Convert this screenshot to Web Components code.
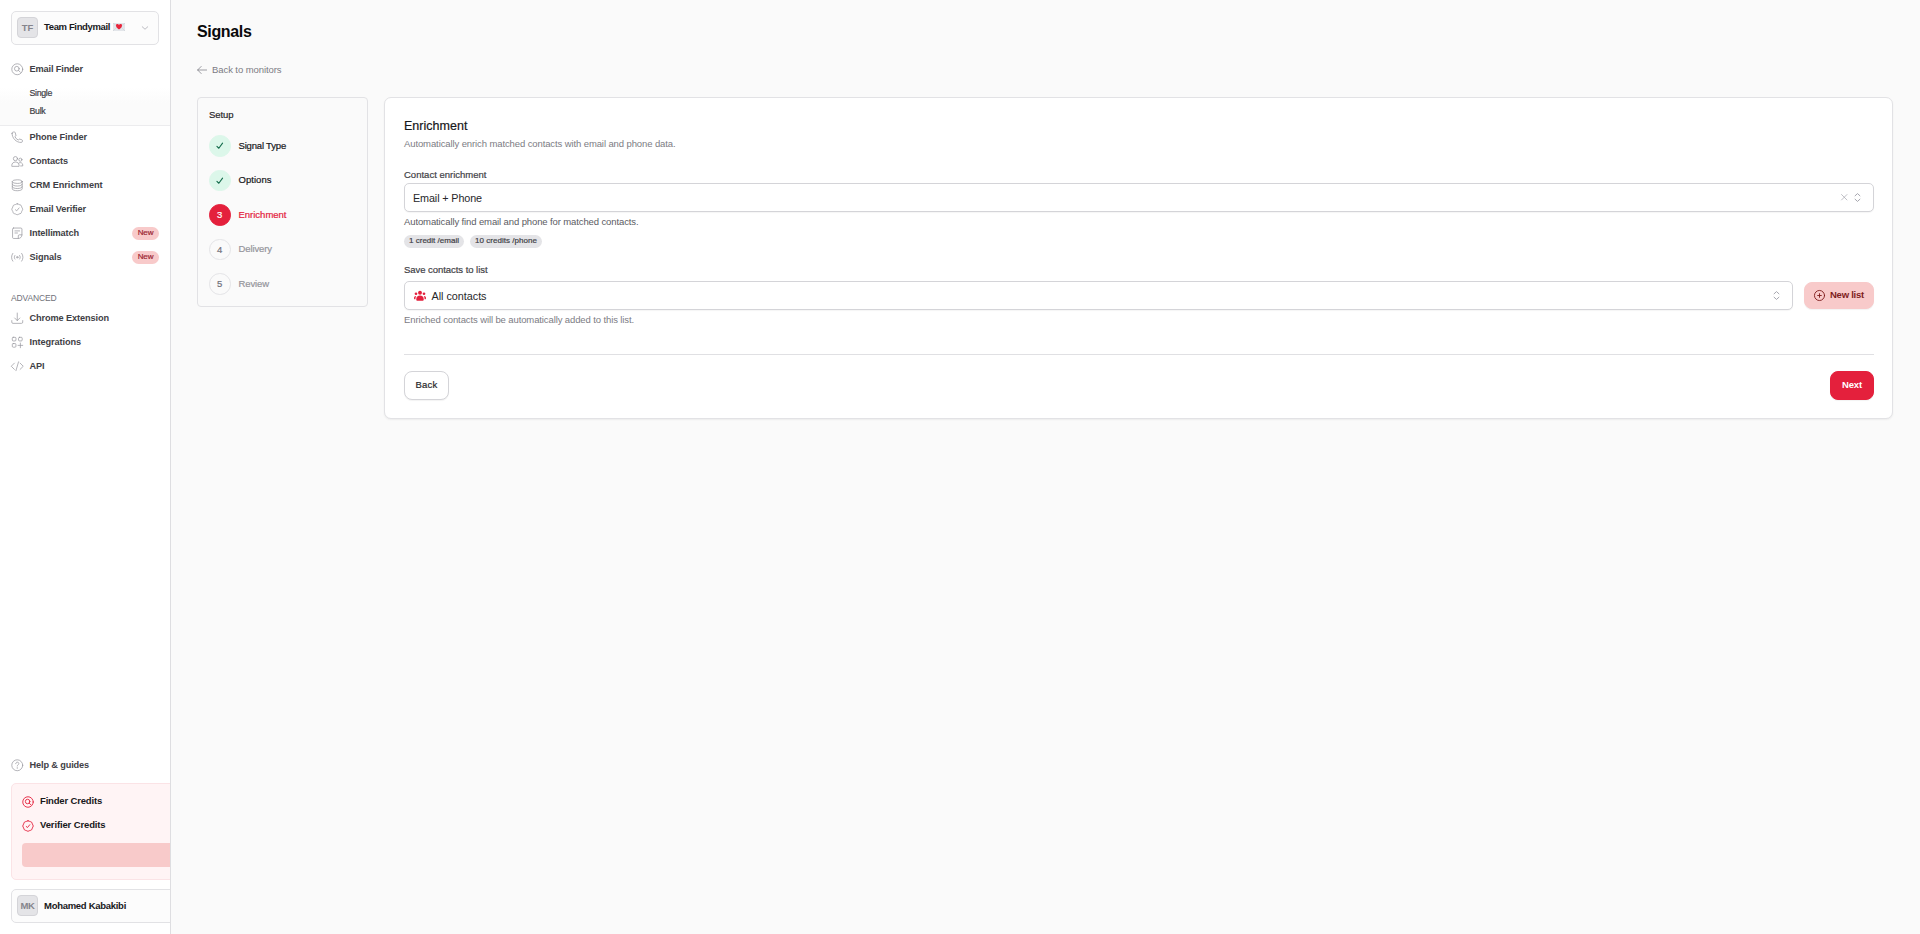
<!DOCTYPE html>
<html lang="en">
<head>
<meta charset="utf-8">
<title>Signals</title>
<style>
  body {
    margin: 0;
    background: #fafafa;
    color: #3f3f46;
    font: 9.5px/12px "Liberation Sans", Arial, sans-serif;
  }
</style>
</head>
<body>
<app-shell></app-shell>

<script>
const icons = {
  search: '<circle cx="12" cy="12" r="10.500"/><circle cx="11.200" cy="11" r="4.500"/><path d="m14.500 14.300 3.500 3.500"/>',
  phone: '<path d="M2 4.500C2 14 10 22 19.500 22c1.400 0 2.500-1.100 2.500-2.500v-1.200c0-.6-.4-1.200-1-1.400l-4.200-1.300c-.6-.2-1.200 0-1.600.5l-1 1.400c-3-1.300-5.400-3.700-6.700-6.700l1.400-1c.5-.4.7-1 .5-1.600L8.100 3C7.900 2.400 7.300 2 6.700 2H4.500C3.100 2 2 3.100 2 4.500z"/>',
  users: '<circle cx="8.500" cy="7" r="4"/><circle cx="18" cy="9" r="3"/><path d="M1.500 21v-1c0-4 3-6.500 7-6.500s7 2.500 7 6.500v1zM15.500 15c3.500-1.500 7 .5 7 4v2h-4"/>',
  database: '<ellipse cx="12" cy="5" rx="9.500" ry="3.500"/><path d="M2.500 5v14c0 2 4.200 3.500 9.500 3.500s9.500-1.500 9.500-3.500V5M2.500 10c0 2 4.200 3.500 9.500 3.500s9.500-1.500 9.500-3.500M2.500 14.800c0 2 4.200 3.500 9.500 3.500s9.500-1.500 9.500-3.500"/>',
  check: '<path d="M12 1.500c1.400 0 2.500 1 3.600 1.500s2.600.3 3.600 1.300.9 2.400 1.400 3.600S22.500 10.600 22.500 12s-1.500 2.900-1.900 4.100-.4 2.600-1.400 3.600-2.500.9-3.600 1.300-2.200 1.500-3.600 1.500-2.500-1-3.600-1.500-2.600-.3-3.600-1.300-.9-2.400-1.400-3.600S1.500 13.400 1.500 12s1.500-2.900 1.900-4.100.4-2.600 1.400-3.600S7.300 3.400 8.400 3 10.600 1.500 12 1.500z"/><path d="m8.500 13 2.500 2 4.500-5.500"/>',
  note: '<path d="M5 2h14c1.200 0 2 .8 2 2v11c0 4-3 7-7 7H5c-1.200 0-2-.8-2-2V4c0-1.200.8-2 2-2zM21 15h-5c-1.200 0-2 .8-2 2v5M7.500 7.500h9M7.500 11.500h5"/>',
  signal: '<circle cx="12" cy="12" r="1.500"/><path d="M7.500 8.500c-1.600 2-1.600 5 0 7M16.500 8.500c1.600 2 1.600 5 0 7M3.500 4.500c-3.300 4.300-3.300 10.700 0 15M20.500 4.500c3.300 4.300 3.300 10.700 0 15"/>',
  download: '<path d="M1.500 16.500v3c0 1.500.8 2.300 2.300 2.300h16.400c1.500 0 2.300-.8 2.300-2.300v-3M12 2v14.500M7 11.500l5 5 5-5"/>',
  grid: '<rect x="2.500" y="2.500" width="7" height="7" rx="1.800"/><rect x="14.500" y="2.500" width="7" height="7" rx="1.800"/><rect x="2.500" y="14.500" width="7" height="7" rx="1.800"/><path d="M18 13.500v9M13.500 18h9"/>',
  code: '<path d="M6.500 6 .5 12l6 6M17.500 6l6 6-6 6M14.500 3.500l-5 17"/>',
  help: '<circle cx="12" cy="12" r="10.500"/><path d="M9 9c0-4 6-4 6-.2 0 2.200-3 2.400-3 4.700M12 16.500v1.500"/>',
  plus: '<circle cx="12" cy="12" r="11"/><path d="M12 8v8M8 12h8"/>',
  arrow: '<path d="M23 12H1.500M10 3.500 1.500 12l8.500 8.500"/>',
  tick: '<path d="m3 14 6 6L21 3.500"/>',
  chevron: '<path d="m1 7 11 10L23 7"/>',
  close: '<path d="m2 2 20 20M22 2 2 22"/>',
  updown: '<path d="m5.500 7.500 6.500-6 6.500 6M5.500 16.500l6.500 6 6.500-6"/>',
  group: '<g fill="currentColor" stroke="none"><circle cx="12" cy="5.500" r="3.900"/><circle cx="4" cy="7.500" r="2.700"/><circle cx="20" cy="7.500" r="2.700"/><path d="M4.500 18.500c0-5 3-7.500 7.500-7.500s7.500 2.500 7.500 7.500c0 2-1 3-2.500 3H7c-1.500 0-2.500-1-2.500-3zM0 16.500C0 13.500 1.500 12 4.500 12c-1.300 2-1.700 4-1.700 6.500H1.500c-1 0-1.500-1-1.500-2zM24 16.500c0-3-1.500-4.500-4.500-4.500 1.300 2 1.700 4 1.700 6.500h1.300c1 0 1.500-1 1.500-2z"/></g>'
}

// shared base: every element renders its template once
class BaseElement extends HTMLElement {
  connectedCallback() {
    if (this.shadowRoot) return
    this.attachShadow({ mode: 'open' })
    this.shadowRoot.innerHTML = this.render()
  }
  attr(name, def = '') {
    return this.getAttribute(name) || def
  }
}

class UiIcon extends BaseElement {
  render() {
    const size = this.attr('size', '12')
    return `
      <style>
        :host { display: block; flex: none; width: ${size}px; height: ${size}px; }
        svg { display: block; width: 100%; height: 100%; overflow: visible; fill: none; stroke: currentColor; stroke-width: ${this.attr('stroke', '1.5')}; stroke-linecap: round; stroke-linejoin: round; }
      </style>
      <svg viewBox="0 0 24 24">${icons[this.attr('name')]}</svg>`
  }
}

// one line of text, tracked so that it takes exactly `w` pixels
class FitText extends BaseElement {
  connectedCallback() {
    super.connectedCallback()
    const want = parseFloat(this.attr('w'))
    const span = this.shadowRoot.querySelector('span')
    const have = span.getBoundingClientRect().width
    // the text may itself come through the slot of a parent
    const nodes = span.querySelector('slot').assignedNodes({ flatten: true })
    const len = nodes.map(n => n.textContent).join('').trim().length
    if (want && len) span.style.letterSpacing = (want - have) / len + 'px'
  }
  render() {
    return `
      <style>
        :host { display: block; flex: none; white-space: nowrap; }
        :host([medium]) { -webkit-text-stroke: .2px currentColor; }
        :host([bold]) { font-weight: 700; }
        span { display: inline-block; }
      </style>
      <span><slot></slot></span>`
  }
}

class UiBadge extends BaseElement {
  render() {
    return `
      <style>
        :host { display: flex; flex: none; box-sizing: border-box; height: 13px; padding-bottom: 1px; align-items: center; justify-content: center; border-radius: 7px; background: #e4e4e7; color: #3f3f46; font-size: 8px; line-height: 10px; }
        :host([red]) { width: 27px; background: #f8caca; color: #9b2530; }
      </style>
      <slot></slot>`
  }
}

class UiAvatar extends BaseElement {
  render() {
    return `
      <style>
        :host { display: flex; flex: none; box-sizing: border-box; width: 21px; height: 21px; align-items: center; justify-content: center; border: 1px solid #d4d4d8; border-radius: 4px; background: #e4e4e7; color: #85858c; }
      </style>
      <slot></slot>`
  }
}

class AccountBox extends BaseElement {
  render() {
    return `
      <style>
        :host { display: flex; box-sizing: border-box; height: 34px; padding: 0 10px 1px 5px; align-items: center; gap: 6px; border: 1px solid #e2e2e5; border-radius: 5px; background: #fcfcfc; color: #18181b; }
      </style>
      <ui-avatar><fit-text bold w="${this.attr('iw')}">${this.attr('initials')}</fit-text></ui-avatar>
      <slot></slot>`
  }
}

class NavItem extends BaseElement {
  render() {
    const badge = this.hasAttribute('new') ? '<ui-badge red><fit-text medium w="15.5">New</fit-text></ui-badge>' : ''
    return `
      <style>
        :host { display: flex; height: 24px; padding: 0 11px; align-items: center; }
        ui-icon { color: #97979f; margin: 1px 6px 0 0; }
        .label { margin-right: auto; color: #3f3f46; font-size: 9.2px; }
      </style>
      <ui-icon name="${this.attr('icon')}" size="12.5" stroke="1.4"></ui-icon>
      <fit-text class="label" bold w="${this.attr('w')}"><slot></slot></fit-text>
      ${badge}`
  }
}

class CreditBox extends BaseElement {
  render() {
    return `
      <style>
        :host { display: block; box-sizing: border-box; height: 97px; padding: 5px 10px; border: 1px solid #fbe3e6; border-radius: 5px; background: #fff4f5; color: #18181b; }
        div { display: flex; height: 24px; align-items: center; gap: 6px; }
        ui-icon { color: #e4203c; margin-top: 2px; }
        p { height: 24px; margin: 6px 0 0; border-radius: 4px; background: #f8caca; }
      </style>
      <div><ui-icon name="search" size="12" stroke="1.8"></ui-icon><fit-text bold w="62">Finder Credits</fit-text></div>
      <div><ui-icon name="check" size="12" stroke="1.8"></ui-icon><fit-text bold w="65.5">Verifier Credits</fit-text></div>
      <p></p>`
  }
}

class SideBar extends BaseElement {
  render() {
    return `
      <style>
        :host { display: flex; flex-direction: column; flex: none; box-sizing: border-box; width: 171px; height: 934px; padding: 11px 0; overflow: hidden; border-right: 1px solid #dedee1; background: #fff; }
        account-box.team { margin: 0 11px 12px; }
        .team fit-text { margin-top: -1px; }
        .team ui-icon { margin-left: auto; color: #b4b4ba; }
        .emoji { display: block; width: 12px; height: 8px; margin: -2px 0 0 -3px; }
        .sub { box-sizing: border-box; height: 45px; margin-bottom: -1px; padding: 3px 0 0 29.5px; border-bottom: 1px solid #ececee; background: linear-gradient(#fff 15%, #fbfbfb 50%); font-size: 8.8px; line-height: 18px; }
        .title { margin: 23px 0 2px 11px; color: #71717a; font-size: 8.5px; }
        .grow { flex: 1; }
        credit-box { margin: 6px -20px 9px 11px; }
        .user { margin: 0 -20px 0 11px; }
      </style>
      <account-box class="team" initials="TF" iw="11.5">
        <fit-text bold w="66">Team Findymail</fit-text>
        <svg class="emoji" viewBox="0 0 12 8"><path fill="#e3e6ea" d="M0 0h12v8H0z"/><path fill="none" stroke="#c9cdd3" stroke-width=".5" d="m0 0 6 5 6-5M0 8l4-4M12 8 8 4"/><path fill="#e8243a" d="M6 6.500C4 5 3 4 3 2.500 3 .8 5.300.6 6 2c.7-1.400 3-1.200 3 .5C9 4 8 5 6 6.500z"/></svg>
        <ui-icon name="chevron" size="6" stroke="3.5"></ui-icon>
      </account-box>
      <nav-item icon="search" w="53.5">Email Finder</nav-item>
      <div class="sub"><fit-text medium w="22.5">Single</fit-text><fit-text medium w="16">Bulk</fit-text></div>
      <nav-item icon="phone" w="57.5">Phone Finder</nav-item>
      <nav-item icon="users" w="38.5">Contacts</nav-item>
      <nav-item icon="database" w="73">CRM Enrichment</nav-item>
      <nav-item icon="check" w="56.5">Email Verifier</nav-item>
      <nav-item icon="note" w="49.5" new>Intellimatch</nav-item>
      <nav-item icon="signal" w="32" new>Signals</nav-item>
      <fit-text class="title" w="45.5">ADVANCED</fit-text>
      <nav-item icon="download" w="79.5">Chrome Extension</nav-item>
      <nav-item icon="grid" w="51.5">Integrations</nav-item>
      <nav-item icon="code" w="15">API</nav-item>
      <div class="grow"></div>
      <nav-item icon="help" w="59.5">Help &amp; guides</nav-item>
      <credit-box></credit-box>
      <account-box class="user" initials="MK" iw="14"><fit-text bold w="82">Mohamed Kabakibi</fit-text></account-box>`
  }
}

class SetupStep extends BaseElement {
  render() {
    const state = this.attr('state')
    const mark = state === 'done' ? '<ui-icon name="tick" size="7.5" stroke="3.5"></ui-icon>' : this.attr('n')
    return `
      <style>
        :host { display: flex; height: 22px; align-items: center; gap: 8px; color: #94949b; }
        b { display: flex; flex: none; box-sizing: border-box; width: 21.5px; height: 21.5px; align-items: center; justify-content: center; border: 1px solid #e4e4e7; border-radius: 50%; color: #71717a; font-weight: 400; -webkit-text-stroke: .2px currentColor; }
        :host([state=done]) { color: #18181b; }
        :host([state=done]) b { border-color: #dcf7ea; background: #dcf7ea; color: #146c4c; -webkit-text-stroke: 0; }
        :host([state=current]) { color: #e4203c; }
        :host([state=current]) b { border-color: #e4203c; background: #e4203c; color: #fff; }
        fit-text { margin-top: -1px; }
      </style>
      <b>${mark}</b><fit-text medium w="${this.attr('w')}"><slot></slot></fit-text>`
  }
}

class SetupSteps extends BaseElement {
  render() {
    return `
      <style>
        :host { display: flex; flex-direction: column; flex: none; box-sizing: border-box; width: 171px; height: 210px; padding: 11px; gap: 12.7px; border: 1px solid #e2e2e5; border-radius: 4px; }
        .head { color: #27272a; margin-bottom: 1.5px; }
      </style>
      <fit-text class="head" medium w="24.5">Setup</fit-text>
      <setup-step state="done" w="47.5">Signal Type</setup-step>
      <setup-step state="done" w="33">Options</setup-step>
      <setup-step state="current" n="3" w="48">Enrichment</setup-step>
      <setup-step n="4" w="33.5">Delivery</setup-step>
      <setup-step n="5" w="30.5">Review</setup-step>`
  }
}

class UiSelect extends BaseElement {
  render() {
    return `
      <style>
        :host { display: flex; flex: 1; box-sizing: border-box; height: 29px; padding: 0 11px 0 8px; align-items: center; border: 1px solid #d4d4d8; border-radius: 5px; background: #fff; color: #27272a; font-size: 10.8px; box-shadow: 0 1px 1px rgba(0,0,0,.04); }
        .end { display: flex; margin-left: auto; align-items: center; gap: 6px; color: #a1a1aa; }
      </style>
      <slot></slot>
      <div class="end">
        ${this.hasAttribute('clear') ? '<ui-icon name="close" size="6.5" stroke="2.5"></ui-icon>' : ''}
        <ui-icon name="updown" size="9" stroke="2.5"></ui-icon>
      </div>`
  }
}

class UiButton extends BaseElement {
  render() {
    return `
      <style>
        :host { display: flex; flex: none; box-sizing: border-box; height: 29px; padding-bottom: 1px; align-items: center; justify-content: center; gap: 5px; border: 1px solid #d4d4d8; border-radius: 8px; background: #fff; color: #27272a; box-shadow: 0 1px 1px rgba(0,0,0,.05); }
        :host([kind=primary]) { border-color: #e4203c; background: #e4203c; color: #fff; }
        :host([kind=soft]) { height: 27px; padding-bottom: 0; border-color: #f8caca; background: #f8caca; color: #7f1d1d; }
      </style>
      <slot></slot>`
  }
}

class EnrichmentCard extends BaseElement {
  render() {
    return `
      <style>
        :host { display: flex; flex-direction: column; flex: 1; box-sizing: border-box; height: 322px; padding: 20px 18px 18px 19px; border: 1px solid #e2e2e5; border-radius: 7px; background: #fff; box-shadow: 0 1px 2px rgba(0,0,0,.06); }
        .row { display: flex; align-items: center; }
        .title { color: #18181b; font-size: 12.5px; line-height: 16px; }
        .muted { color: #7c7c84; }
        .hint { color: #5b5b63; }
        .actions { box-sizing: border-box; height: 46px; margin-top: auto; padding-top: 16px; border-top: 1px solid #e0e0e3; align-items: flex-start; justify-content: space-between; }
      </style>
      <fit-text class="title" medium w="63.5">Enrichment</fit-text>
      <fit-text class="muted" w="271.5" style="margin-top:4px">Automatically enrich matched contacts with email and phone data.</fit-text>
      <fit-text medium w="82.5" style="margin-top:19px">Contact enrichment</fit-text>
      <div class="row" style="margin-top:2px">
        <ui-select clear><fit-text w="69">Email + Phone</fit-text></ui-select>
      </div>
      <fit-text class="hint" w="234.5" style="margin-top:4px">Automatically find email and phone for matched contacts.</fit-text>
      <div class="row" style="margin-top:7px;gap:6px">
        <ui-badge style="width:60px"><fit-text medium w="50">1 credit /email</fit-text></ui-badge>
        <ui-badge style="width:72px"><fit-text medium w="62">10 credits /phone</fit-text></ui-badge>
      </div>
      <fit-text medium w="83.5" style="margin-top:16px">Save contacts to list</fit-text>
      <div class="row" style="margin-top:5px;gap:11px">
        <ui-select>
          <ui-icon name="group" size="12" style="color:#e4203c;margin:1px 6px 0 .5px"></ui-icon>
          <fit-text w="55">All contacts</fit-text>
        </ui-select>
        <ui-button kind="soft" style="width:70px">
          <ui-icon name="plus" size="11" stroke="2"></ui-icon>
          <fit-text bold w="34" style="margin-top:-1px">New list</fit-text>
        </ui-button>
      </div>
      <fit-text class="muted" w="230" style="margin-top:4px">Enriched contacts will be automatically added to this list.</fit-text>
      <div class="row actions">
        <ui-button style="width:45px"><fit-text medium w="22">Back</fit-text></ui-button>
        <ui-button kind="primary" style="width:44px"><fit-text bold w="20">Next</fit-text></ui-button>
      </div>`
  }
}

class AppShell extends BaseElement {
  render() {
    return `
      <style>
        :host { display: flex; height: 934px; overflow: hidden; }
        main { flex: 1; padding: 22px 27px 0 26px; }
        .title { color: #09090b; font-size: 16px; line-height: 20px; }
        .back { display: flex; margin: 22px 0 21px; align-items: center; gap: 5px; color: #7c7c84; }
        .cols { display: flex; align-items: flex-start; gap: 16px; }
      </style>
      <side-bar></side-bar>
      <main>
        <fit-text class="title" bold w="54.5">Signals</fit-text>
        <div class="back"><ui-icon name="arrow" size="10" stroke="1.8"></ui-icon><fit-text w="69.5">Back to monitors</fit-text></div>
        <div class="cols"><setup-steps></setup-steps><enrichment-card></enrichment-card></div>
      </main>`
  }
}

customElements.define('app-shell', AppShell)
customElements.define('side-bar', SideBar)
customElements.define('account-box', AccountBox)
customElements.define('nav-item', NavItem)
customElements.define('credit-box', CreditBox)
customElements.define('setup-steps', SetupSteps)
customElements.define('setup-step', SetupStep)
customElements.define('enrichment-card', EnrichmentCard)
customElements.define('ui-select', UiSelect)
customElements.define('ui-button', UiButton)
customElements.define('ui-badge', UiBadge)
customElements.define('ui-avatar', UiAvatar)
customElements.define('ui-icon', UiIcon)
// last, so that its measurements see the final styles
customElements.define('fit-text', FitText)
</script>
</body>
</html>
